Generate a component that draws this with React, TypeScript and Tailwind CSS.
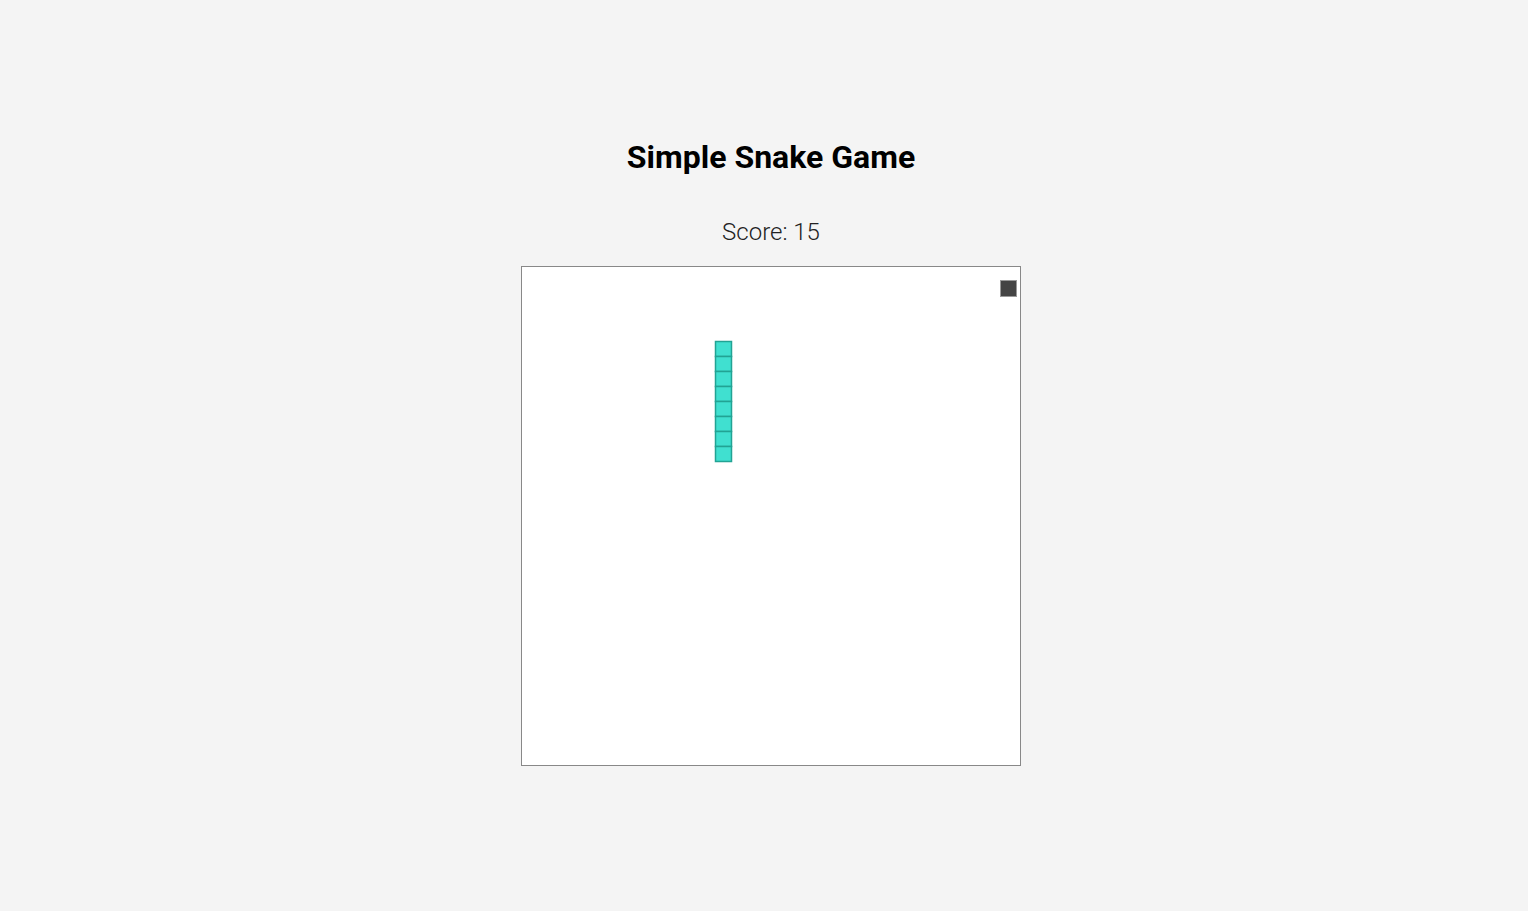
import React from "react";

export default function App() {
  const segs = Array.from({ length: 8 }, (_, i) => i);
  return (
    <div
      className="min-h-[911px] w-full bg-[#f4f4f4] flex flex-col items-center pl-[14px] pt-[138px]"
      style={{ fontFamily: "Roboto, 'Noto Sans', sans-serif" }}
    >
      <h1 className="text-[32px] leading-[38px] font-bold text-black">Simple Snake Game</h1>
      <div className="mt-[42px] text-[24px] leading-[28px] font-light text-[#222]">Score: 15</div>
      <div className="relative mt-[20px] w-[500px] h-[500px] border border-[#888] bg-white">
        <svg width="498" height="498" className="absolute left-0 top-0">
          {segs.map((i) => (
            <rect
              key={i}
              x={193.5}
              y={74.5 + i * 15}
              width={16}
              height={15}
              fill="#40e0d0"
              stroke="#22a394"
              strokeWidth={1.5}
            />
          ))}
          <rect x={478.5} y={13.5} width={16} height={16} fill="#444" stroke="#999" strokeWidth={1} />
        </svg>
      </div>
    </div>
  );
}
